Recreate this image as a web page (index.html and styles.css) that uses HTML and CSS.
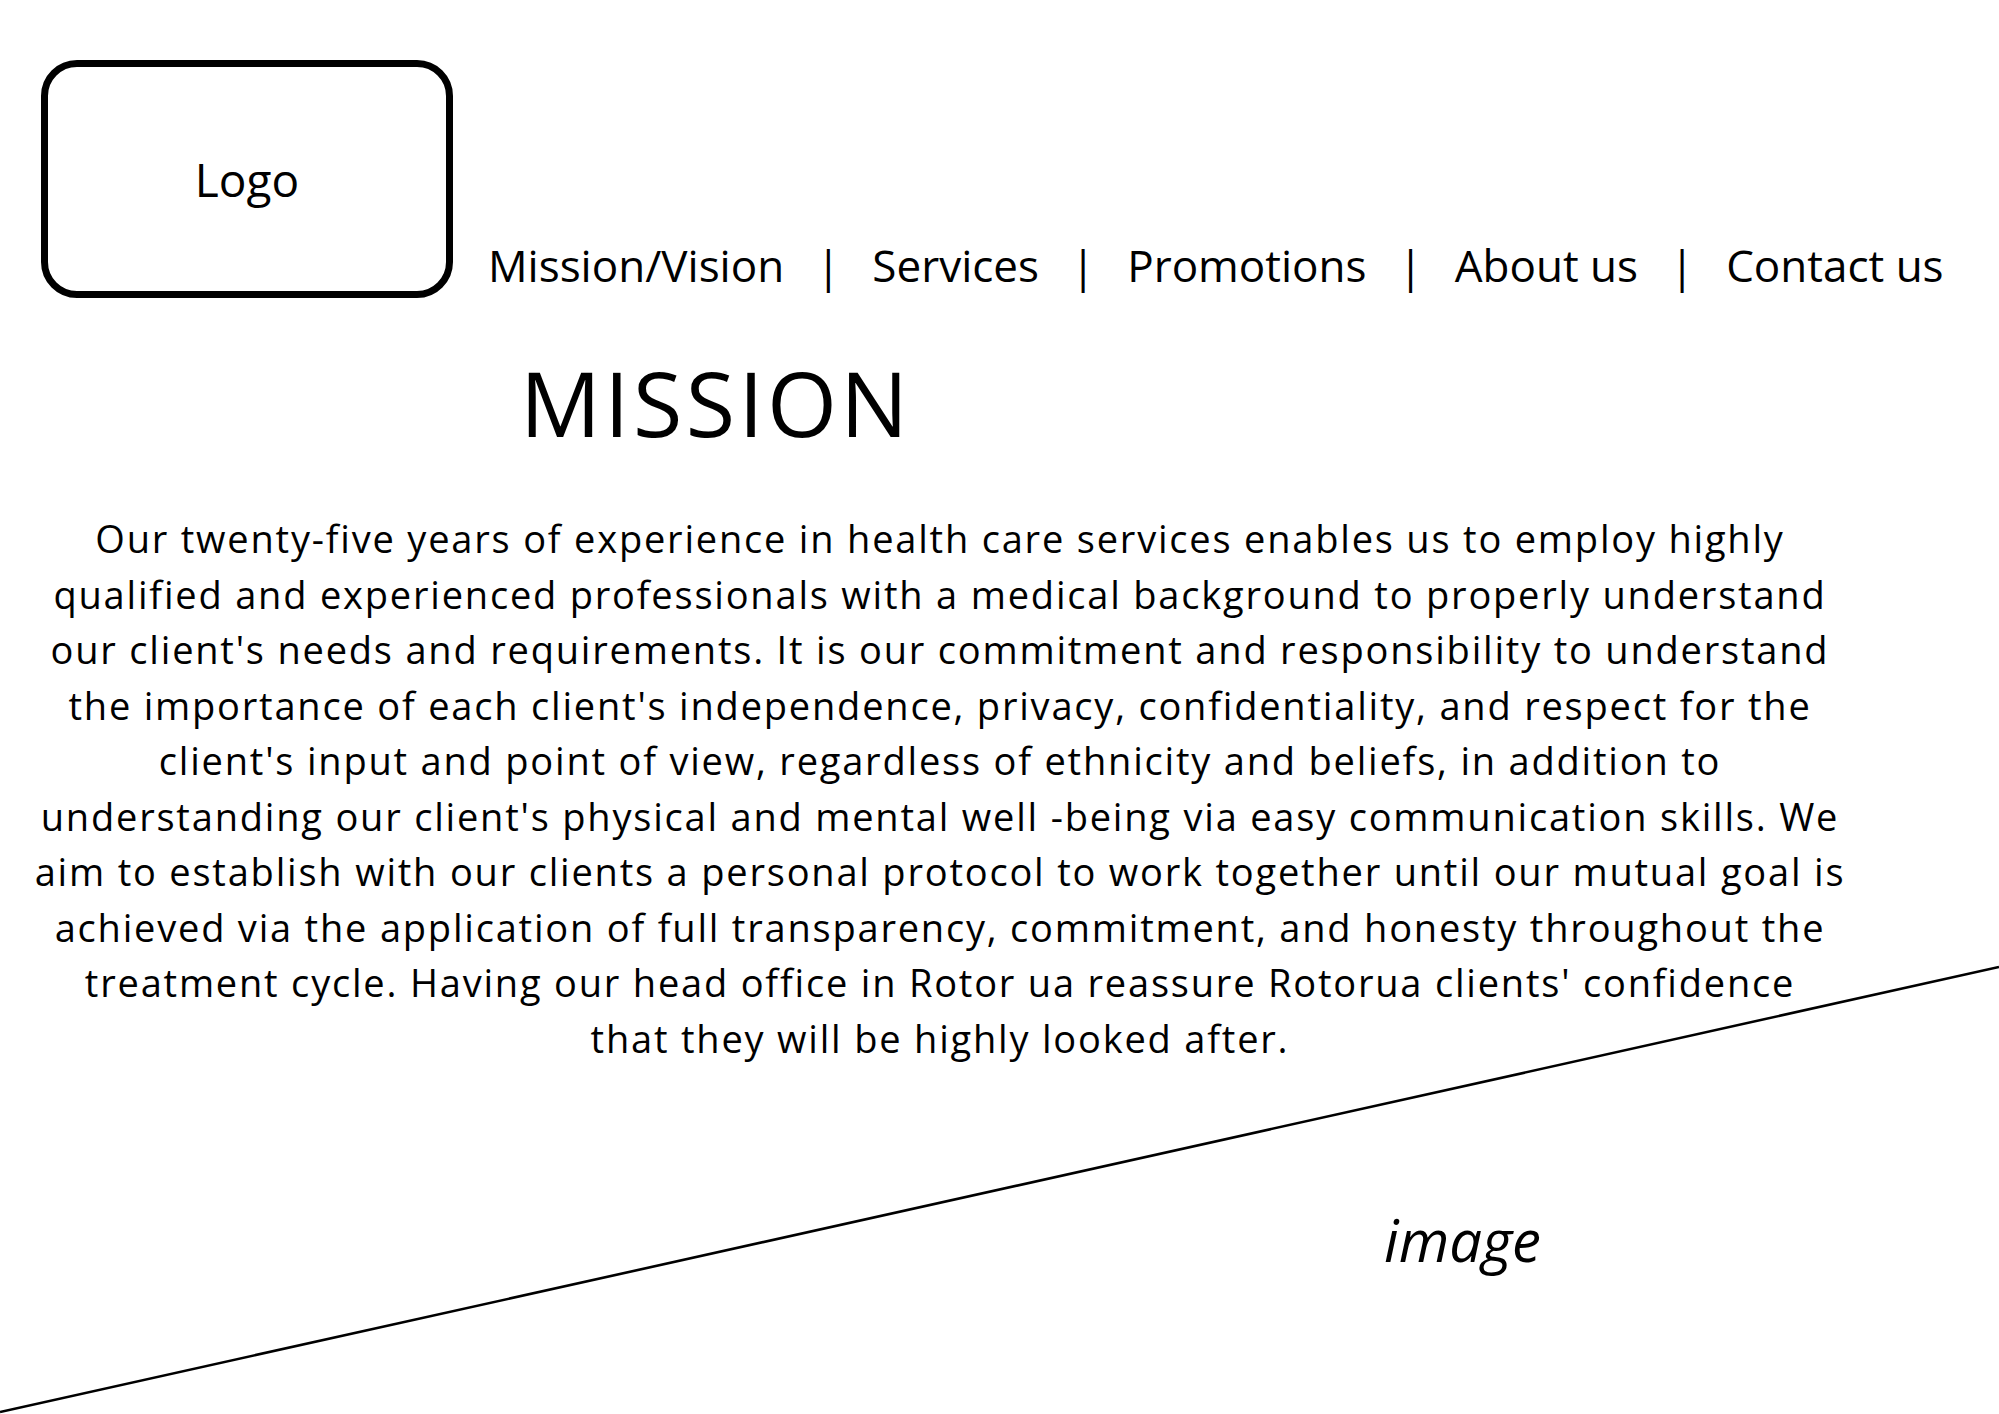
FILE: index.html
```html
<!DOCTYPE html>
<html lang="en">
<head>
  <meta charset="UTF-8">
  <title>Mission</title>
  <meta name="viewport" content="width=device-width, initial-scale=1.0">
  <link rel="stylesheet" href="styles.css">
</head>
<body>
  <div class="page">
    <header class="header">
      <div class="logo">Logo</div>
      <nav class="nav">
        <a href="#">Mission/Vision</a>
        <span class="sep">|</span>
        <a href="#">Services</a>
        <span class="sep">|</span>
        <a href="#">Promotions</a>
        <span class="sep">|</span>
        <a href="#">About us</a>
        <span class="sep">|</span>
        <a href="#">Contact us</a>
      </nav>
    </header>

    <h1 class="title">MISSION</h1>

    <p class="text">Our twenty-five years of experience in health care services enables us to employ highly<br>
      qualified and experienced professionals with a medical background to properly understand<br>
      our client's needs and requirements. It is our commitment and responsibility to understand<br>
      the importance of each client's independence, privacy, confidentiality, and respect for the<br>
      client's input and point of view, regardless of ethnicity and beliefs, in addition to<br>
      understanding our client's physical and mental well -being via easy communication skills. We<br>
      aim to establish with our clients a personal protocol to work together until our mutual goal is<br>
      achieved via the application of full transparency, commitment, and honesty throughout the<br>
      treatment cycle. Having our head office in Rotor ua reassure Rotorua clients' confidence<br>
      that they will be highly looked after.</p>

    <div class="image-area">image</div>

    <svg class="divider" viewBox="0 0 1999 1414" preserveAspectRatio="none">
      <line x1="0" y1="1412" x2="1999" y2="967" stroke="#000" stroke-width="2.6" />
    </svg>
  </div>
</body>
</html>
```

FILE: styles.css
```css
body {
  margin: 0;
  padding: 0;
  font-family: 'Open Sans', 'Noto Sans', sans-serif;
  color: #000;
  background: #fff;
}

.page {
  position: relative;
  width: 1999px;
  height: 1414px;
  overflow: hidden;
}

.header {
  display: flex;
  align-items: flex-end;
  padding: 60px 0 0 41px;
}

.logo {
  box-sizing: border-box;
  flex-shrink: 0;
  width: 412px;
  height: 238px;
  border: 7px solid #000;
  border-radius: 36px;
  display: flex;
  align-items: center;
  justify-content: center;
  font-size: 46px;
}

.nav {
  display: flex;
  align-items: center;
  gap: 32px;
  margin: 0 0 3px 35px;
  font-size: 44px;
  line-height: 60px;
  white-space: nowrap;
}

.nav a {
  color: #000;
  text-decoration: none;
}

.title {
  margin: 59px 0 0 520px;
  font-size: 90px;
  font-weight: 400;
  line-height: 90px;
  letter-spacing: 3.4px;
}

.text {
  width: 1880px;
  margin: 64px 0 0 0;
  font-size: 38px;
  line-height: 55.5px;
  letter-spacing: 1.8px;
  text-align: center;
  white-space: nowrap;
}

.image-area {
  margin-top: 134px;
  padding-left: 1384px;
  font-size: 58px;
  font-style: italic;
}

.divider {
  position: absolute;
  left: 0;
  top: 0;
  width: 1999px;
  height: 1414px;
  pointer-events: none;
}
```
